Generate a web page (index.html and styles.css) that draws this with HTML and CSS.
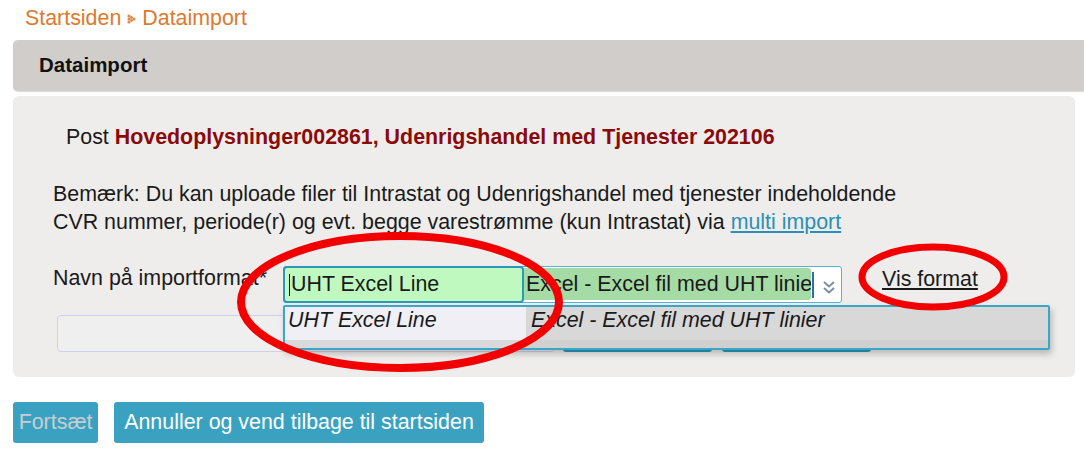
FILE: index.html
```html
<!DOCTYPE html>
<html lang="da">
<head>
<meta charset="utf-8">
<title>Dataimport</title>
<link rel="stylesheet" href="styles.css">
</head>
<body>
<div class="page">
  <nav class="crumbs">
    <a class="crumb" href="#">Startsiden</a>
    <svg class="sep" width="9" height="10" viewBox="0 0 9 10"><circle cx="2" cy="2" r="1.6"/><circle cx="2" cy="8" r="1.6"/><circle cx="7" cy="5" r="1.6"/><circle cx="2" cy="5" r="1.6"/><circle cx="4.5" cy="3.5" r="1.4"/><circle cx="4.5" cy="6.5" r="1.4"/></svg>
    <a class="crumb" href="#">Dataimport</a>
  </nav>
  <div class="header">Dataimport</div>
  <div class="panel">
    <p class="post">Post <strong>Hovedoplysninger002861, Udenrigshandel med Tjenester 202106</strong></p>
    <p class="note">Bemærk: Du kan uploade filer til Intrastat og Udenrigshandel med tjenester indeholdende<br>CVR nummer, periode(r) og evt. begge varestrømme (kun Intrastat) via <a class="link" href="#">multi import</a></p>
    <div class="format-row">
      <label class="label">Navn på importformat*</label>
      <div class="combo">
        <div class="combo-input"><span class="caret"></span>UHT Excel Line</div>
        <input class="combo-desc" type="text" readonly value="Excel - Excel fil med UHT linier">
        <span class="caret caret-end"></span>
        <svg class="chev" width="14" height="16" viewBox="0 0 14 16"><path d="M2 3l5 4.5L12 3M2 9l5 4.5L12 9" fill="none" stroke="#7d8fa3" stroke-width="2"/></svg>
        <div class="dropdown">
          <div class="dd-name">UHT Excel Line</div>
          <div class="dd-desc">Excel - Excel fil med UHT linier</div>
        </div>
      </div>
      <a class="vis" href="#">Vis format</a>
    </div>
    <div class="file-row">
      <div class="file-input"></div>
      <button class="btn small-btn" aria-label="Vælg fil"></button>
      <button class="btn small-btn" aria-label="Upload"></button>
    </div>
  </div>
  <div class="actions">
    <button class="btn disabled">Fortsæt</button>
    <button class="btn">Annuller og vend tilbage til startsiden</button>
  </div>
  <svg class="marks" width="1084" height="453" viewBox="0 0 1084 453">
    <ellipse cx="400" cy="302" rx="159" ry="66" fill="none" stroke="#f20000" stroke-width="8"/>
    <ellipse cx="933" cy="277" rx="71" ry="30" fill="none" stroke="#f20000" stroke-width="7"/>
  </svg>
</div>
</body>
</html>
```
FILE: styles.css
```css
* { box-sizing: border-box; }
body {
  margin: 0;
  font-family: "Liberation Sans", Arial, sans-serif;
  font-size: 21.4px;
  color: #1a1a1a;
  background: #fff;
}
.page {
  position: relative;
  width: 1084px;
  height: 453px;
  overflow: hidden;
  padding-left: 13px;
}
.crumbs {
  display: flex;
  align-items: center;
  gap: 6px;
  height: 38px;
  padding-left: 12px;
  padding-bottom: 1px;
}
.crumb {
  color: #dd7a2e;
  text-decoration: none;
}
.sep { fill: #dd8a4a; }
.header {
  margin-top: 2px;
  height: 51px;
  margin-right: -10px;
  background: #d1cdca;
  border-radius: 5px 0 0 5px;
  box-shadow: 0 1px 1px rgba(0,0,0,0.15);
  font-weight: bold;
  font-size: 20.5px;
  display: flex;
  align-items: center;
  padding-left: 26px;
  padding-bottom: 2px;
  color: #111;
}
.panel {
  margin-top: 5px;
  margin-right: 9px;
  height: 281px;
  background: #eeedeb;
  border-radius: 6px;
  padding: 26px 0 0 40px;
}
.post {
  margin: 0 0 0 13px;
  line-height: 30px;
}
.post strong { color: #8a0a0a; }
.note {
  margin: 28px 0 0;
  line-height: 28px;
}
.link { color: #2a90b8; }
.format-row {
  display: flex;
  align-items: flex-start;
  margin-top: 30px;
  height: 43px;
}
.label {
  width: 230px;
  padding-top: 0;
  line-height: 24px;
  white-space: nowrap;
}
.combo {
  position: relative;
  display: flex;
  align-items: stretch;
  width: 559px;
  height: 37px;
  background: #fff;
  border: 1px solid #53b4d6;
  border-radius: 3px;
}
.combo-input {
  position: relative;
  width: 241px;
  margin: -1px 0 -1px -1px;
  background: #c0f9bf;
  border: 2px solid #2b98bd;
  border-radius: 4px;
  display: flex;
  align-items: center;
  padding-left: 4px;
  white-space: nowrap;
}
.caret {
  display: inline-block;
  width: 1px;
  height: 22px;
  background: #111;
  margin-right: 1px;
}
.combo-desc {
  width: 287px;
  background: #a5dba4;
  margin: 1px 0 2px 0;
  border: none;
  border-radius: 0 3px 3px 0;
  padding: 0 0 0 2px;
  font-family: inherit;
  font-size: 21.4px;
  color: #1a1a1a;
  outline: none;
}
.caret-end {
  align-self: center;
  margin: 0 0 0 1px;
  background: #2b6fb0;
  width: 2px;
  height: 26px;
}
.chev {
  align-self: center;
  margin-left: 8px;
  margin-top: 4px;
}
.dropdown {
  position: absolute;
  left: -1px;
  top: 38px;
  width: 767px;
  height: 45px;
  display: flex;
  border: 2px solid #3aa6c8;
  border-radius: 2px;
  background: #d8d8d8;
  box-shadow: 2px 4px 6px rgba(0,0,0,0.22);
  font-style: italic;
  z-index: 2;
  white-space: nowrap;
}
.dd-name {
  width: 241px;
  background: #efeff5;
  border-bottom: 8px solid #d9d9dc;
  padding: 1px 0 0 3px;
  line-height: 24px;
}
.dd-desc {
  flex: 1;
  background: #d8d8d8;
  border-bottom: 8px solid #d0d0d0;
  padding: 1px 0 0 5px;
  line-height: 24px;
}
.vis {
  margin-left: 40px;
  margin-top: 1px;
  color: #1a1a1a;
  line-height: 24px;
}
.file-row {
  display: flex;
  gap: 8px;
  margin-left: 4px;
  margin-top: 6px;
}
.file-input {
  width: 498px;
  height: 37px;
  border: 1px solid #cfd0ef;
  border-radius: 4px;
  background: #efefef;
}
.btn {
  font-family: inherit;
  font-size: 21.4px;
  color: #fff;
  background: #3aa2c0;
  border: none;
  border-radius: 3px;
  height: 41px;
  padding: 0 10px;
}
.small-btn {
  width: 149px;
  height: 37px;
  background: #2b9ab9;
}
.small-btn + .small-btn { margin-left: 2px; }
.actions {
  display: flex;
  gap: 16px;
  margin-top: 25px;
}
.disabled { color: #c6ced2; width: 85px; padding: 0; }
.actions .btn:last-child { width: 370px; padding: 0; }
.marks {
  position: absolute;
  left: 0;
  top: 0;
  pointer-events: none;
  z-index: 5;
}
```
